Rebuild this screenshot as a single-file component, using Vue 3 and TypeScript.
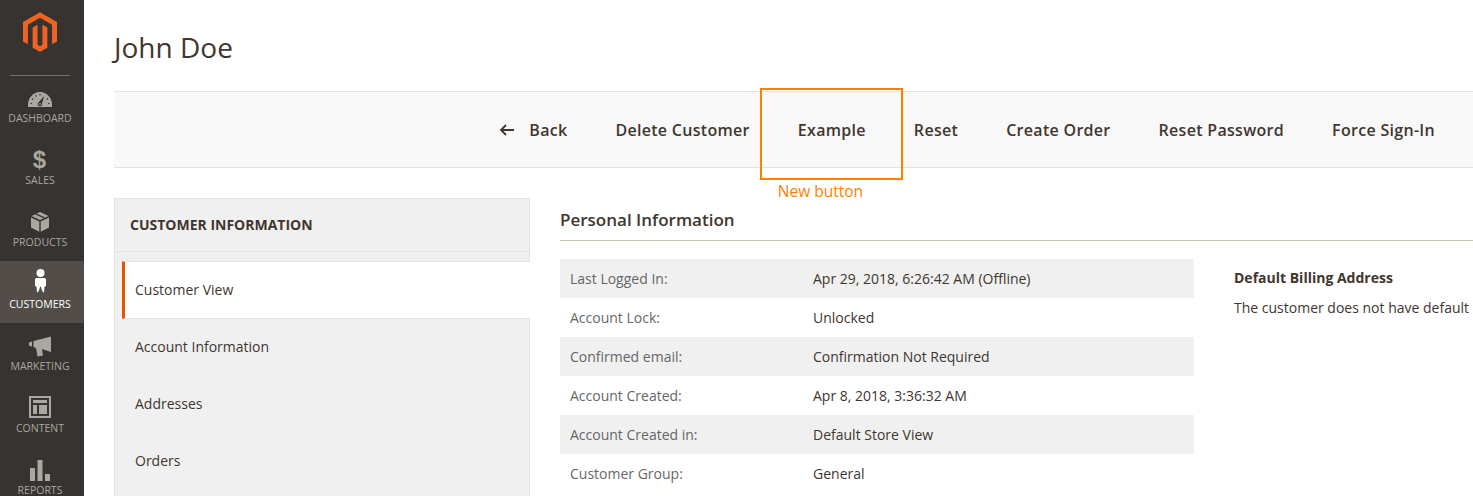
<template>
  <div class="page">
    <nav class="sidebar">
      <div class="logo">
        <svg width="34" height="40" viewBox="0 0 25 29.2">
          <path fill="#f26322" d="M12.500 0 25 7.200v14.400l-3.600 2V9.300l-8.900-5.100-8.900 5.100v14.300L0 21.600V7.200z" />
          <path fill="#f26322" d="M14.300 24l-1.800 1.100-1.800-1.100V9.300l-3.600 2v14.800l5.400 3.100 5.400-3.100V11.300l-3.600-2z" />
        </svg>
      </div>
      <ul class="menu">
        <li v-for="item in menu" :key="item.label" class="menu-item" :class="{ active: item.active }">
          <svg class="menu-icon" width="26" height="26" viewBox="0 0 26 26" v-html="item.icon"></svg>
          <span>{{ item.label }}</span>
        </li>
      </ul>
    </nav>

    <main class="main">
      <h1 class="title">John Doe</h1>

      <div class="actions">
        <button class="action back">
          <svg width="16" height="12" viewBox="0 0 16 12">
            <path d="M15 6H2M7 1 2 6l5 5" fill="none" stroke="#41362f" stroke-width="1.800" />
          </svg>
          Back
        </button>
        <button class="action">Delete Customer</button>
        <button class="action highlighted">
          Example
          <span class="highlight-box"></span>
          <span class="highlight-note">New button</span>
        </button>
        <button class="action">Reset</button>
        <button class="action">Create Order</button>
        <button class="action">Reset Password</button>
        <button class="action">Force Sign-In</button>
      </div>

      <div class="columns">
        <aside class="panel">
          <div class="panel-title">CUSTOMER INFORMATION</div>
          <ul class="tabs">
            <li v-for="(tab, i) in tabs" :key="tab" class="tab" :class="{ current: i === 0 }">{{ tab }}</li>
          </ul>
        </aside>

        <section class="content">
          <h2 class="section-title">Personal Information</h2>
          <div class="info">
            <div class="table">
              <div v-for="row in rows" :key="row[0]" class="row">
                <span class="row-label">{{ row[0] }}</span>
                <span class="row-value">{{ row[1] }}</span>
              </div>
            </div>
            <div class="address">
              <h3>Default Billing Address</h3>
              <p>The customer does not have default billing address.</p>
            </div>
          </div>
        </section>
      </div>
    </main>
  </div>
</template>

<script setup lang="ts">
interface MenuItem {
  label: string;
  icon: string;
  active?: boolean;
}

const menu: MenuItem[] = [
  {
    label: 'DASHBOARD',
    icon: '<path fill="#aaa6a0" d="M1 22v-2C1 12.500 6.400 7 13 7s12 5.500 12 13v2z"/><path stroke="#373330" stroke-width="1.200" d="M5 13.500l1.200 1M8.500 10.200l.8 1.400M13 9v1.600M21 13.500l-1.200 1M3.500 18.500h1.500M22.500 18.500H21"/><path fill="#373330" d="M17.300 10.800l-2.300 7.700a2.200 2.200 0 1 1-3.200-1.300z"/><circle cx="13" cy="19" r=".9" fill="#aaa6a0"/>',
  },
  {
    label: 'SALES',
    icon: '<text x="12.500" y="21" text-anchor="middle" font-family="Liberation Sans" font-weight="700" font-size="24" fill="#aaa6a0">$</text>',
  },
  {
    label: 'PRODUCTS',
    icon: '<path fill="#aaa6a0" d="M13 3 21.500 7 13 11 4.500 7zM4 8.500l8.300 4v10.300L4 18.500zM22 8.500l-8.300 4v10.300l8.300-4.300z"/><path fill="#373330" d="m8 5.200 8.500 4 1.600-.8-8.500-4z"/>',
  },
  {
    label: 'CUSTOMERS',
    active: true,
    icon: '<circle cx="13.500" cy="2" r="4" fill="#fff"/><path fill="#fff" d="M9.500 7h8l1.500 1v7l-1.500.800-.5 6-2-2-1-4-1 0-1 4-2 2-.5-6-1.500-.800V8z"/>',
  },
  {
    label: 'MARKETING',
    icon: '<path fill="#aaa6a0" d="M2 9.500 5 8.500v5l-3-.800zM6.500 8 24 3.500v15.500L15 16l1 6.500-5.500 1L9 15l-2.500-1z"/>',
  },
  {
    label: 'CONTENT',
    icon: '<path fill="#aaa6a0" fill-rule="evenodd" d="M2 1h22v22H2zm2 2v18h18V3zm2 2h14v3H6zm0 5h4v9H6zm6 0h8v9h-8z"/>',
  },
  {
    label: 'REPORTS',
    icon: '<path fill="#aaa6a0" d="M3 11h5v13H3zM10.500 3h5v21h-5zM18 17h5v7h-5z"/>',
  },
];

const tabs: string[] = ['Customer View', 'Account Information', 'Addresses', 'Orders'];

const rows: [string, string][] = [
  ['Last Logged In:', 'Apr 29, 2018, 6:26:42 AM (Offline)'],
  ['Account Lock:', 'Unlocked'],
  ['Confirmed email:', 'Confirmation Not Required'],
  ['Account Created:', 'Apr 8, 2018, 3:36:32 AM'],
  ['Account Created in:', 'Default Store View'],
  ['Customer Group:', 'General'],
];
</script>

<style>
html,
body {
  margin: 0;
  overflow: hidden;
  background: #fff;
}
</style>

<style scoped>
.page {
  display: flex;
  height: 496px;
  overflow: hidden;
  font-family: "Open Sans", "Liberation Sans", sans-serif;
  color: #41362f;
}

.sidebar {
  flex: 0 0 84px;
  background: #373330;
}

.logo {
  display: flex;
  justify-content: center;
  height: 76px;
  padding-top: 12px;
  box-sizing: border-box;
  margin: 0 14px 0 10px;
  border-bottom: 1px solid #736e69;
}

.logo svg {
  flex: none;
}

.menu,
.tabs {
  list-style: none;
  margin: 0;
  padding: 0;
}

.menu {
  margin-top: -1px;
}

.menu-item {
  display: flex;
  flex-direction: column;
  align-items: center;
  height: 62px;
  padding-right: 4px;
  box-sizing: border-box;
  font-size: 10.5px;
  line-height: 14px;
  color: #aaa6a0;
}

.menu-item.active {
  background: #524d49;
  color: #fff;
}

.menu-icon {
  margin-top: 10px;
  overflow: visible;
}

.main {
  flex: 1;
  min-width: 0;
  padding-left: 30px;
}

.title {
  margin: 0;
  height: 91px;
  padding-top: 28px;
  box-sizing: border-box;
  font-size: 28px;
  line-height: 38px;
  font-weight: 400;
}

.actions {
  display: flex;
  justify-content: flex-end;
  align-items: center;
  height: 77px;
  box-sizing: border-box;
  padding-right: 38px;
  gap: 48px;
  background: #f8f8f8;
  border-top: 1px solid #e3e3e3;
  border-bottom: 1px solid #e3e3e3;
}

.action {
  position: relative;
  padding: 0;
  border: 0;
  background: none;
  font: 600 16px/22px "Open Sans", sans-serif;
  letter-spacing: 0.3px;
  color: #41362f;
  white-space: nowrap;
}

.back svg {
  margin-right: 10px;
}

.highlight-box {
  position: absolute;
  left: -38px;
  top: -31px;
  width: 139px;
  height: 88px;
  border: 2px solid #ff7f00;
}

.highlight-note {
  position: absolute;
  left: -20px;
  top: 61px;
  font-weight: 400;
  font-size: 15.5px;
  letter-spacing: 0;
  color: #ff7f00;
}

.columns {
  display: flex;
  margin-top: 30px;
}

.panel {
  flex: 0 0 416px;
  box-sizing: border-box;
  height: 320px;
  background: #f0f0f0;
  border: 1px solid #e3e3e3;
}

.panel-title {
  height: 53px;
  box-sizing: border-box;
  padding: 15px 15px 0;
  font-size: 14px;
  line-height: 22px;
  font-weight: 700;
  border-bottom: 1px solid #e3e3e3;
}

.tabs {
  padding-top: 9px;
}

.tab {
  height: 57px;
  box-sizing: border-box;
  padding: 17px 20px 0;
  font-size: 14px;
  line-height: 22px;
}

.tab.current {
  height: 58px;
  margin-left: 7px;
  margin-right: -1px;
  padding-left: 10px;
  background: #fff;
  border-left: 3px solid #eb5202;
  border-top: 1px solid #e3e3e3;
  border-bottom: 1px solid #e3e3e3;
}

.content {
  flex: 1;
  min-width: 0;
  margin-left: 30px;
}

.section-title {
  margin: 0;
  height: 43px;
  box-sizing: border-box;
  padding-top: 9px;
  font-size: 17px;
  line-height: 26px;
  font-weight: 600;
  border-bottom: 1px solid #cac3b4;
}

.info {
  display: flex;
  margin-top: 18px;
}

.table {
  flex: 0 0 634px;
}

.row {
  display: flex;
  align-items: center;
  height: 39px;
  padding-left: 10px;
  font-size: 14px;
}

.row:nth-child(odd) {
  background: #f0f0f0;
}

.row-label {
  flex: 0 0 243px;
  color: #666;
}

.row-value {
  color: #41362f;
}

.address {
  margin-left: 40px;
  font-size: 14px;
  white-space: nowrap;
}

.address h3 {
  margin: 9px 0 0;
  font-size: 14px;
  line-height: 20px;
  font-weight: 700;
}

.address p {
  margin: 10px 0 0;
  line-height: 20px;
}
</style>
